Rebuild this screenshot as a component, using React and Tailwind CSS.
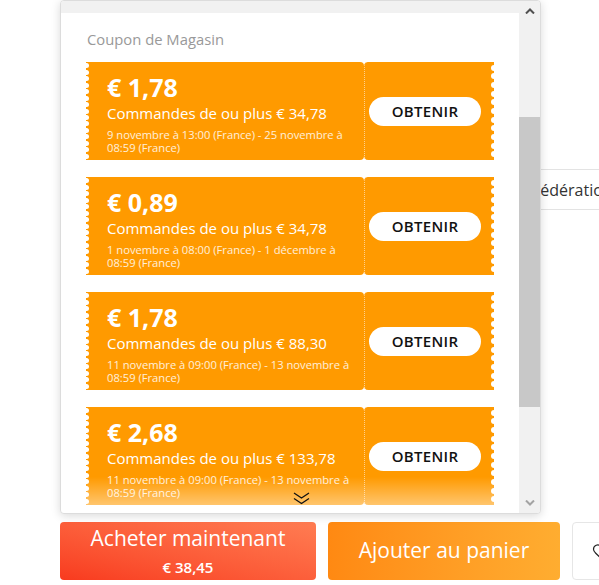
import { Heart } from 'lucide-react';

const coupons = [
  { amount: '€ 1,78', min: '€ 34,78', from: '9 novembre à 13:00 (France) - 25 novembre à' },
  { amount: '€ 0,89', min: '€ 34,78', from: '1 novembre à 08:00 (France) - 1 décembre à' },
  { amount: '€ 1,78', min: '€ 88,30', from: '11 novembre à 09:00 (France) - 13 novembre à' },
  { amount: '€ 2,68', min: '€ 133,78', from: '11 novembre à 09:00 (France) - 13 novembre à' },
];

// white bumps along a ticket edge
function Scallops({ side }) {
  const left = side === 'left';
  const n = left ? 15 : 11;
  return (
    <div className={'absolute top-0 bottom-0 flex flex-col justify-evenly ' + (left ? 'left-[-2px]' : 'right-[-3px]')}>
      {Array.from({ length: n }, (_, i) => (
        <div key={i} className={left ? 'w-[5px] h-[5px] rounded-full bg-white' : 'w-[6px] h-[6px] rounded-full bg-white'} />
      ))}
    </div>
  );
}

function Coupon({ c }) {
  return (
    <div className="flex h-[98px] w-[408px] shrink-0">
      <div className="relative w-[278px] h-full bg-[#ff9a00] rounded-r-[4px] pl-[21px] pt-[11px] text-white overflow-hidden">
        <Scallops side="left" />
        <div className="text-[25px] leading-[28px] font-bold">{c.amount}</div>
        <div className="mt-[3px] text-[15px] leading-[18px] whitespace-nowrap">Commandes de ou plus {c.min}</div>
        <div className="mt-[6px] text-[11.2px] leading-[13px] text-white/85 whitespace-nowrap">
          {c.from}<br />08:59 (France)
        </div>
      </div>
      <div className="relative w-[130px] h-full bg-[#ff9a00] rounded-l-[4px] border-l border-dotted border-[#ffd08a] flex items-center pl-[4px] overflow-hidden">
        <div className="w-[112px] h-[29px] rounded-full bg-white flex items-center justify-center text-[15px] font-semibold text-[#111] tracking-[0.3px]">
          OBTENIR
        </div>
        <Scallops side="right" />
      </div>
    </div>
  );
}

export default function App() {
  return (
    <div className="relative w-[599px] h-[585px] overflow-hidden bg-white font-['Open_Sans',sans-serif]">
      {/* page behind the popup */}
      <div className="h-[522px] pt-[169px] pl-[520px]">
        <div className="h-[41px] w-[200px] border-y border-[#e3e3e3] flex items-center pl-[12px] text-[16px] text-[#333] whitespace-nowrap">
          Fédération de Russie
        </div>
      </div>

      {/* action buttons */}
      <div className="flex gap-3 pl-[60px] h-[58px]">
        <div className="w-[256px] shrink-0 rounded-[4px] bg-linear-to-tr from-[#f83a1e] to-[#ff7c52] flex flex-col items-center pt-[3px] text-white">
          <div className="text-[21px] leading-[26px] font-medium">Acheter maintenant</div>
          <div className="mt-[6px] text-[15px] leading-[20px] font-semibold">€ 38,45</div>
        </div>
        <div className="w-[232px] shrink-0 rounded-[4px] bg-linear-to-r from-[#ff8912] to-[#ffad30] flex items-center justify-center text-white text-[21px] font-medium">
          Ajouter au panier
        </div>
        <div className="w-[60px] shrink-0 rounded-[4px] border border-[#e6e6e6] flex items-center pl-[19px]">
          <Heart size={18} strokeWidth={1.6} className="text-[#222] shrink-0" />
        </div>
      </div>

      {/* coupon popup */}
      <div className="absolute left-[60px] top-0 w-[481px] h-[514px] bg-white border border-[#dcdcdc] rounded-[4px] shadow-[0_2px_10px_rgba(0,0,0,0.15)] flex overflow-hidden">
        <div className="relative w-[458px] h-full overflow-hidden">
          <div className="h-[12px] bg-[#f1f1f1]" />
          <div className="pl-[26px] pt-[16px] text-[14.8px] leading-[20px] text-[#999]">Coupon de Magasin</div>
          <div className="mt-[13px] pl-[25px] flex flex-col gap-[17px]">
            {coupons.map((c, i) => <Coupon key={i} c={c} />)}
          </div>
          <div className="absolute bottom-0 left-0 right-0 h-[36px] bg-linear-to-b from-white/0 to-white/55" />
        </div>

        {/* scrollbar */}
        <div className="w-[21px] h-full bg-[#f1f1f1] flex flex-col">
          <div className="h-[20px] flex items-center justify-center">
            <svg width="10" height="6" viewBox="0 0 10 6"><path d="M1 5.5 L5 1.5 L9 5.5" fill="none" stroke="#505050" strokeWidth="2" /></svg>
          </div>
          <div className="h-[96px]" />
          <div className="h-[290px] bg-[#c8c8c8]" />
          <div className="flex-1" />
          <div className="h-[20px] flex items-center justify-center">
            <svg width="10" height="6" viewBox="0 0 10 6"><path d="M1 0.5 L5 4.5 L9 0.5" fill="none" stroke="#a3a3a3" strokeWidth="2" /></svg>
          </div>
        </div>

        {/* scroll-more hint */}
        <div className="absolute left-[232px] top-[491px]">
          <svg width="17" height="13" viewBox="0 0 17 13">
            <path d="M1 1 L8.5 6 L16 1 M1 6.5 L8.5 11.5 L16 6.5" fill="none" stroke="#111" strokeWidth="1.3" />
          </svg>
        </div>
      </div>
    </div>
  );
}
